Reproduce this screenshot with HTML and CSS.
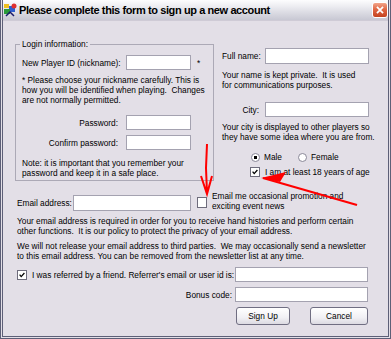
FILE: index.html
```html
<!DOCTYPE html>
<html lang="en">
<head>
    <meta charset="UTF-8">
    <title>Sign up</title>
    <link rel="stylesheet" href="styles.css">
</head>
<body>
    <div class="window">
        <div class="titlebar">
            <svg class="app-icon" viewBox="0 0 14 14">
                <rect x="1" y="1" width="5" height="4" fill="#f0c020"/>
                <rect x="6" y="3" width="6" height="6" fill="#2f5fd0"/>
                <circle cx="11" cy="3" r="2.5" fill="#e03030"/>
                <rect x="1" y="6" width="6" height="5" fill="#2a9a3a"/>
                <path d="M3 13 L7 9 L11 13" stroke="#1a1a6a" stroke-width="1.5" fill="none"/>
            </svg>
            <span class="title">Please complete this form to sign up a new account</span>
            <span class="close">
                <svg viewBox="0 0 16 16"><path d="M4.5 4.5 L11.5 11.5 M11.5 4.5 L4.5 11.5" stroke="#fff" stroke-width="2"/></svg>
            </span>
        </div>

        <div class="client">
            <div class="top">
                <fieldset class="group">
                    <legend>Login information:</legend>
                    <div class="idrow">
                        <label>New Player ID (nickname):</label>
                        <input type="text" class="short">
                        <span>*</span>
                    </div>
                    <p class="hint">* Please choose your nickname carefully. This is<br>how you will be identified when playing.&nbsp; Changes<br>are not normally permitted.</p>
                    <div class="pwgrid">
                        <label>Password:</label>
                        <input type="password" class="short">
                        <label>Confirm password:</label>
                        <input type="password" class="short">
                    </div>
                    <p class="hint note">Note: it is important that you remember your<br>password and keep it in a safe place.</p>
                </fieldset>

                <div class="right">
                    <div class="rgrid">
                        <label>Full name:</label>
                        <input type="text" class="long tall">
                    </div>
                    <p class="hint side">Your name is kept private.&nbsp; It is used<br>for communications purposes.</p>
                    <div class="rgrid city">
                        <label>City:</label>
                        <input type="text" class="long">
                    </div>
                    <p class="hint side2">Your city is displayed to other players so<br>they have some idea where you are from.</p>
                    <div class="gender">
                        <span class="opt"><span class="radio on"></span>Male</span>
                        <span class="opt"><span class="radio"></span>Female</span>
                    </div>
                    <div class="agerow">
                        <span class="checkbox"><svg viewBox="0 0 10 10"><path d="M2 4.5 L4 7 L8 2.5" stroke="#000" stroke-width="1.6" fill="none"/></svg></span>
                        I am at least 18 years of age
                    </div>
                </div>
            </div>

            <div class="email">
                <label>Email address:</label>
                <input type="text" class="mail">
                <span class="checkbox"></span>
                <span class="promo">Email me occasional promotion and<br>exciting event news</span>
            </div>

            <p class="hint para">Your email address is required in order for you to receive hand histories and perform certain<br>other functions.&nbsp; It is our policy to protect the privacy of your email address.</p>
            <p class="hint para">We will not release your email address to third parties.&nbsp; We may occasionally send a newsletter<br>to this email address. You can be removed from the newsletter list at any time.</p>

            <div class="refgrid">
                <div class="refcheck">
                    <span class="checkbox"><svg viewBox="0 0 10 10"><path d="M2 4.5 L4 7 L8 2.5" stroke="#000" stroke-width="1.6" fill="none"/></svg></span>
                    I was referred by a friend. Referrer's email or user id is:
                </div>
                <input type="text" class="ref">
                <label>Bonus code:</label>
                <input type="text" class="ref">
                <div class="buttons">
                    <button class="signup">Sign Up</button>
                    <button class="cancel">Cancel</button>
                </div>
            </div>
        </div>

        <!-- red marks drawn on the screenshot -->
        <svg class="marks" viewBox="0 0 391 339">
            <path d="M207 144 L206 168 L207 193 M201 176 L207 194 L212 176" stroke="#f00" stroke-width="2" fill="none"/>
            <path d="M357 205 L263 178" stroke="#f00" stroke-width="2.2" fill="none"/>
            <path d="M261 178 L286 172 L280 182 Z" fill="#f00"/>
        </svg>
    </div>
</body>
</html>
```

FILE: styles.css
```css
body {
    margin: 0;
    font-family: "Liberation Sans", Arial, sans-serif;
    font-size: 8.3px;
    color: #000;
}

.window {
    position: relative;
    width: 391px;
    height: 339px;
    box-sizing: border-box;
    border: 3px double #5d5f77;
    border-top: 0;
    background: #e3dfe7;
    overflow: hidden;
}

.titlebar {
    display: flex;
    align-items: center;
    height: 20px;
    border-bottom: 1px solid #cfcbd6;
    background: linear-gradient(to bottom, #fdfdfe 0%, #ebebf0 35%, #dadae2 65%, #c8c8d3 100%);
}

.app-icon {
    width: 14px;
    height: 14px;
    margin: 0 2px 0 0;
}

.title {
    flex: 1;
    font-weight: bold;
    font-size: 11px;
    letter-spacing: -0.4px;
}

.close {
    width: 16px;
    height: 16px;
    box-sizing: border-box;
    border: 1px solid #fff;
    border-radius: 3px;
    background: linear-gradient(to bottom, #f2a48a 0%, #e06845 45%, #c4421f 100%);
}

.close svg {
    display: block;
    width: 14px;
    height: 14px;
}

.client {
    white-space: nowrap;
}

.top {
    display: flex;
    align-items: flex-start;
    padding: 18px 0 0 12px;
}

.group {
    width: 199px;
    box-sizing: border-box;
    margin: 0;
    padding: 6px 0 2px 6px;
    border: 1px solid #aca9b6;
}

legend {
    padding: 0 2px;
    margin-left: -2px;
    line-height: 10px;
}

input {
    margin: 0;
    padding: 0;
    height: 15px;
    box-sizing: border-box;
    border: 1px solid #a4a2b0;
    background: #fff;
}

input.short { width: 65px; }
input.long { width: 104px; }
input.tall { height: 16px; }
input.mail { width: 118px; height: 16px; margin-top: 4px; }
input.ref { width: 133px; }

.idrow,
.pwgrid {
    display: grid;
    grid-template-columns: 98px 65px auto;
    column-gap: 6px;
    align-items: center;
}

.pwgrid {
    grid-template-columns: 96px 65px;
    column-gap: 8px;
    row-gap: 5px;
    margin-top: 10px;
}

.pwgrid label {
    text-align: right;
}

.hint {
    margin: 5px 0 0;
    line-height: 10px;
}

.note { margin-top: 8px; }

.right {
    margin: 9px 0 0 8px;
}

.rgrid {
    display: grid;
    grid-template-columns: 37px 104px;
    column-gap: 6px;
    align-items: center;
}

.rgrid label { text-align: right; }

.side { margin-top: 6px; }
.city { margin-top: 12px; }
.side2 { margin-top: 5px; }

.gender {
    display: flex;
    align-items: center;
    height: 10px;
    margin: 10px 0 0 29px;
}

.opt {
    display: flex;
    align-items: center;
}

.opt + .opt { margin-left: 16px; }

.radio {
    width: 9px;
    height: 9px;
    box-sizing: border-box;
    margin-right: 4px;
    border: 1px solid #8a8898;
    border-radius: 50%;
    background: #fff;
}

.radio.on {
    background: radial-gradient(circle, #000 0 1.6px, #fff 2px);
}

.agerow {
    display: flex;
    align-items: center;
    height: 10px;
    margin: 5px 0 0 28px;
}

.checkbox {
    display: inline-block;
    flex: none;
    width: 10px;
    height: 10px;
    box-sizing: border-box;
    margin-right: 5px;
    border: 1px solid #6e6c7c;
    background: #fff;
}

.checkbox svg {
    display: block;
    width: 8px;
    height: 8px;
}

.email {
    display: flex;
    align-items: flex-start;
    margin: 10px 0 0 14px;
}

.email label {
    width: 56px;
    margin-top: 4px;
    line-height: 16px;
}

.email .checkbox {
    height: 11px;
    margin: 6px 5px 0 6px;
}

.promo {
    line-height: 10px;
}

.para { margin-left: 14px; }

.refgrid {
    display: grid;
    grid-template-columns: 215px 133px;
    column-gap: 3px;
    row-gap: 5px;
    align-items: center;
    margin: 6px 0 0 14px;
}

.refcheck {
    display: flex;
    align-items: center;
}

.refgrid label { text-align: right; }

.buttons {
    grid-column: 2;
    display: flex;
    justify-content: space-between;
}

button {
    height: 18px;
    margin: 0;
    padding: 0;
    font: inherit;
    color: #000;
    border: 1px solid #706e82;
    border-radius: 3px;
    background: linear-gradient(to bottom, #ffffff 0%, #f1f0f4 60%, #dcdae2 100%);
}

.signup { width: 54px; margin-left: 1px; }
.cancel { width: 58px; }

.marks {
    position: absolute;
    top: 0;
    left: -3px;
    width: 391px;
    height: 339px;
    pointer-events: none;
}
```
